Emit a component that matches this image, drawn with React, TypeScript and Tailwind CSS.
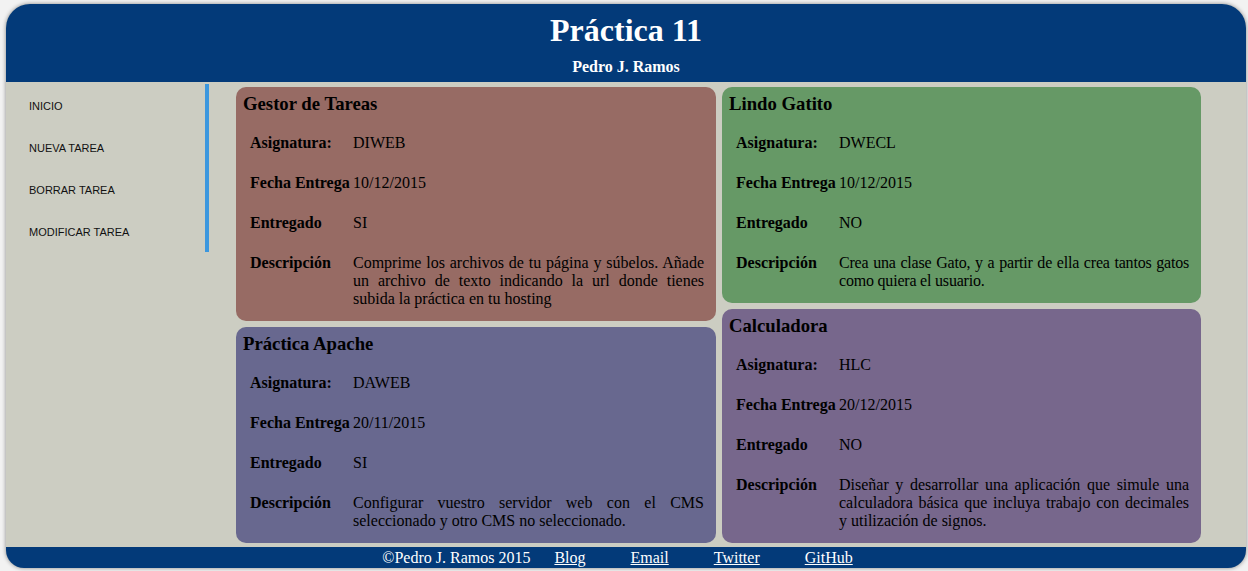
import React from "react";

interface Tarea {
  titulo: string;
  asignatura: string;
  fecha: string;
  entregado: string;
  descripcion: string;
  color: string;
  ajuste?: string;
}

const izquierda: Tarea[] = [
  {
    titulo: "Gestor de Tareas",
    asignatura: "DIWEB",
    fecha: "10/12/2015",
    entregado: "SI",
    descripcion:
      "Comprime los archivos de tu página y súbelos. Añade un archivo de texto indicando la url donde tienes subida la práctica en tu hosting",
    color: "bg-[#976b64]",
  },
  {
    titulo: "Práctica Apache",
    asignatura: "DAWEB",
    fecha: "20/11/2015",
    entregado: "SI",
    descripcion:
      "Configurar vuestro servidor web con el CMS seleccionado y otro CMS no seleccionado.",
    color: "bg-[#68688f]",
  },
];

const derecha: Tarea[] = [
  {
    titulo: "Lindo Gatito",
    asignatura: "DWECL",
    fecha: "10/12/2015",
    entregado: "NO",
    descripcion:
      "Crea una clase Gato, y a partir de ella crea tantos gatos como quiera el usuario.",
    color: "bg-[#669966]",
    // el navegador original corta la linea despues de "gatos"
    ajuste: "tracking-[-0.2px]",
  },
  {
    titulo: "Calculadora",
    asignatura: "HLC",
    fecha: "20/12/2015",
    entregado: "NO",
    descripcion:
      "Diseñar y desarrollar una aplicación que simule una calculadora básica que incluya trabajo con decimales y utilización de signos.",
    color: "bg-[#77678c]",
  },
];

const menu = ["INICIO", "NUEVA TAREA", "BORRAR TAREA", "MODIFICAR TAREA"];

const links = ["Blog", "Email", "Twitter", "GitHub"];

const Fila: React.FC<{ label: string; children: React.ReactNode; className?: string }> = ({
  label,
  children,
  className,
}) => (
  <div className="grid grid-cols-[103px_1fr]">
    <span className="font-bold">{label}</span>
    <span className={className}>{children}</span>
  </div>
);

const Tarjeta: React.FC<{ tarea: Tarea }> = ({ tarea }) => (
  <div className={`${tarea.color} rounded-[10px] pt-[6px] pb-[13px] text-black`}>
    <h3 className="px-[7px] text-[18.72px] leading-[22px] font-bold">{tarea.titulo}</h3>
    <div className="mt-[19px] pl-[14px] pr-[12px] flex flex-col gap-[22px] text-[16px] leading-[18px]">
      <Fila label="Asignatura:">{tarea.asignatura}</Fila>
      <Fila label="Fecha Entrega">{tarea.fecha}</Fila>
      <Fila label="Entregado">{tarea.entregado}</Fila>
      <Fila label="Descripción" className={`text-justify ${tarea.ajuste ?? ""}`}>
        {tarea.descripcion}
      </Fila>
    </div>
  </div>
);

export default function App() {
  return (
    <div className="w-[1248px] h-[571px] bg-[#f2f2f2] pt-[4px] pl-[6px] font-['Liberation_Serif',serif]">
      <div className="w-[1240px] h-[564px] flex flex-col rounded-t-[24px] rounded-b-[18px] overflow-hidden bg-[#cccdc2] shadow-[0_0_4px_rgba(0,0,0,0.45)]">
        <header className="h-[78px] bg-[#033a79] text-white flex flex-col items-center pt-[10px]">
          <h1 className="text-[32px] leading-[32px] font-bold">Práctica 11</h1>
          <p className="mt-[12px] text-[16px] leading-[18px] font-bold">Pedro J. Ramos</p>
        </header>

        <div className="flex-1 flex">
          <aside className="w-[203px] pt-[2px]">
            <nav className="border-r-[4px] border-[#3b97de] font-['Liberation_Sans',sans-serif] text-[11px] text-[#111]">
              {menu.map((item) => (
                <div key={item} className="h-[42px] flex items-center pl-[23px] pt-[2px]">
                  {item}
                </div>
              ))}
            </nav>
          </aside>

          <main className="flex gap-[6px] pl-[27px] pt-[5px]">
            <div className="w-[480px] flex flex-col gap-[6px]">
              {izquierda.map((t) => (
                <Tarjeta key={t.titulo} tarea={t} />
              ))}
            </div>
            <div className="w-[479px] flex flex-col gap-[6px]">
              {derecha.map((t) => (
                <Tarjeta key={t.titulo} tarea={t} />
              ))}
            </div>
          </main>
        </div>

        <footer className="mt-[4px] h-[21px] pl-[4px] bg-[#033a79] text-white text-[16px] leading-[21px] flex justify-center">
          <span>©Pedro J. Ramos 2015</span>
          {links.map((l) => (
            <a key={l} href="#" className="ml-[24px] mr-[21px] underline">
              {l}
            </a>
          ))}
        </footer>
      </div>
    </div>
  );
}
